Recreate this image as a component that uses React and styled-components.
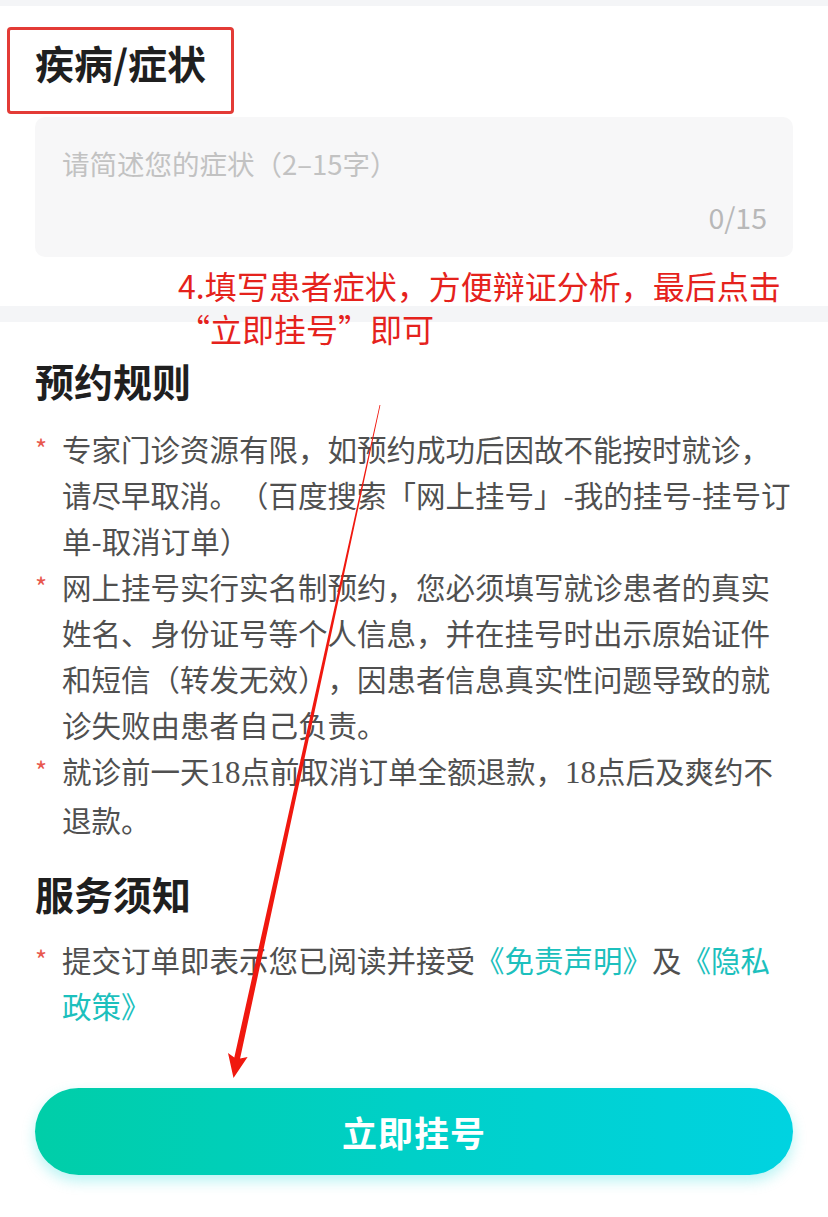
import React from 'react';
import styled, { createGlobalStyle } from 'styled-components';

const GlobalStyle = createGlobalStyle`
  body {
    margin: 0;
    background: #fff;
    font-family: "Noto Sans CJK SC", "Noto Sans", sans-serif;
    text-spacing-trim: space-all;
  }
`;

const Page = styled.div`
  position: relative;
  width: 828px;
  min-height: 1217px;
  background: #fff;
  overflow: hidden;
`;

const GreyBand = styled.div`
  height: ${p => p.h}px;
  background: #f4f5f7;
`;

const Section = styled.section`
  padding: ${p => p.top}px 35px ${p => p.bottom}px;
`;

const Title = styled.h2`
  margin: 0;
  font-size: 39px;
  line-height: 50px;
  font-weight: 700;
  color: #1f1f1f;
`;

const InputBox = styled.div`
  margin-top: 30px;
  height: 140px;
  background: #f7f7f8;
  border-radius: 10px;
  display: flex;
  flex-direction: column;
  justify-content: space-between;
  padding: 26px 26px 20px 27px;
  box-sizing: border-box;
`;

const Placeholder = styled.div`
  font-size: 27.5px;
  line-height: 40px;
  color: #c2c2c2;
`;

const Counter = styled.div`
  align-self: flex-end;
  font-size: 28.5px;
  line-height: 40px;
  color: #b8b8b8;
`;

const Rules = styled.ul`
  list-style: none;
  margin: ${p => p.mt}px 0 0;
  padding: 0;
`;

const Rule = styled.li`
  display: flex;
  font-size: 29.5px;
  line-height: 46px;
  color: #505050;
  white-space: nowrap;
`;

const Star = styled.span`
  width: 27px;
  flex-shrink: 0;
  color: #e8584d;
  font-size: 26px;
`;

const Num = styled.span`
  font-family: "Liberation Serif", serif;
  font-size: 31px;
`;

const Link = styled.span`
  color: #1cc0bd;
`;

const Button = styled.button`
  display: block;
  width: 758px;
  height: 87px;
  margin: 60px 0 0 35px;
  border: none;
  border-radius: 44px;
  background: linear-gradient(90deg, #00cea8 0%, #00d0c8 50%, #00d3e1 100%);
  box-shadow: 0 6px 14px rgba(0, 215, 215, 0.28);
  color: #fff;
  font-family: "Noto Sans CJK SC", sans-serif;
  font-size: 35px;
  font-weight: 700;
  letter-spacing: 1px;
`;

const Marker = styled.div`
  position: absolute;
  left: 7px;
  top: 27px;
  width: 227px;
  height: 87px;
  box-sizing: border-box;
  border: 3px solid #e33b36;
  border-radius: 4px;
  pointer-events: none;
`;

const Note = styled.div`
  position: absolute;
  left: 178px;
  top: 264px;
  font-size: 32px;
  line-height: 43px;
  color: #e5221c;
  white-space: nowrap;
`;

const Overlay = styled.svg`
  position: absolute;
  left: 0;
  top: 0;
  pointer-events: none;
`;

export default function App() {
  return (
    <Page>
      <GlobalStyle />
      <GreyBand h={6} />
      <Section top={31} bottom={49}>
        <Title>疾病/症状</Title>
        <InputBox>
          <Placeholder>请简述您的症状（2–15字）</Placeholder>
          <Counter>0/15</Counter>
        </InputBox>
      </Section>
      <GreyBand h={16} />
      <Section top={33} bottom={0}>
        <Title>预约规则</Title>
        <Rules mt={20}>
          <Rule>
            <Star>*</Star>
            <span>
              专家门诊资源有限，如预约成功后因故不能按时就诊，<br />
              请尽早取消。（百度搜索「网上挂号」-我的挂号-挂号订<br />
              单-取消订单）
            </span>
          </Rule>
          <Rule>
            <Star>*</Star>
            <span>
              网上挂号实行实名制预约，您必须填写就诊患者的真实<br />
              姓名、身份证号等个人信息，并在挂号时出示原始证件<br />
              和短信（转发无效），因患者信息真实性问题导致的就<br />
              诊失败由患者自己负责。
            </span>
          </Rule>
          <Rule>
            <Star>*</Star>
            <span>
              就诊前一天<Num>18</Num>点前取消订单全额退款，<Num>18</Num>点后及爽约不<br />
              退款。
            </span>
          </Rule>
        </Rules>
      </Section>
      <Section top={26} bottom={0}>
        <Title>服务须知</Title>
        <Rules mt={18}>
          <Rule>
            <Star>*</Star>
            <span>
              提交订单即表示您已阅读并接受<Link>《免责声明》</Link>及<Link>《隐私<br />
              政策》</Link>
            </span>
          </Rule>
        </Rules>
      </Section>
      <Button>立即挂号</Button>

      <Marker />
      <Note>
        4.填写患者症状，方便辩证分析，最后点击<br />
        “立即挂号”即可
      </Note>
      <Overlay width="828" height="1217" viewBox="0 0 828 1217">
        <polygon
          fill="#f0180f"
          points="379.6,404.9 380.4,405.1 240.1,1058.6 247.6,1057.1 233.5,1078 228,1052.9 234.3,1057.4"
        />
      </Overlay>
    </Page>
  );
}
